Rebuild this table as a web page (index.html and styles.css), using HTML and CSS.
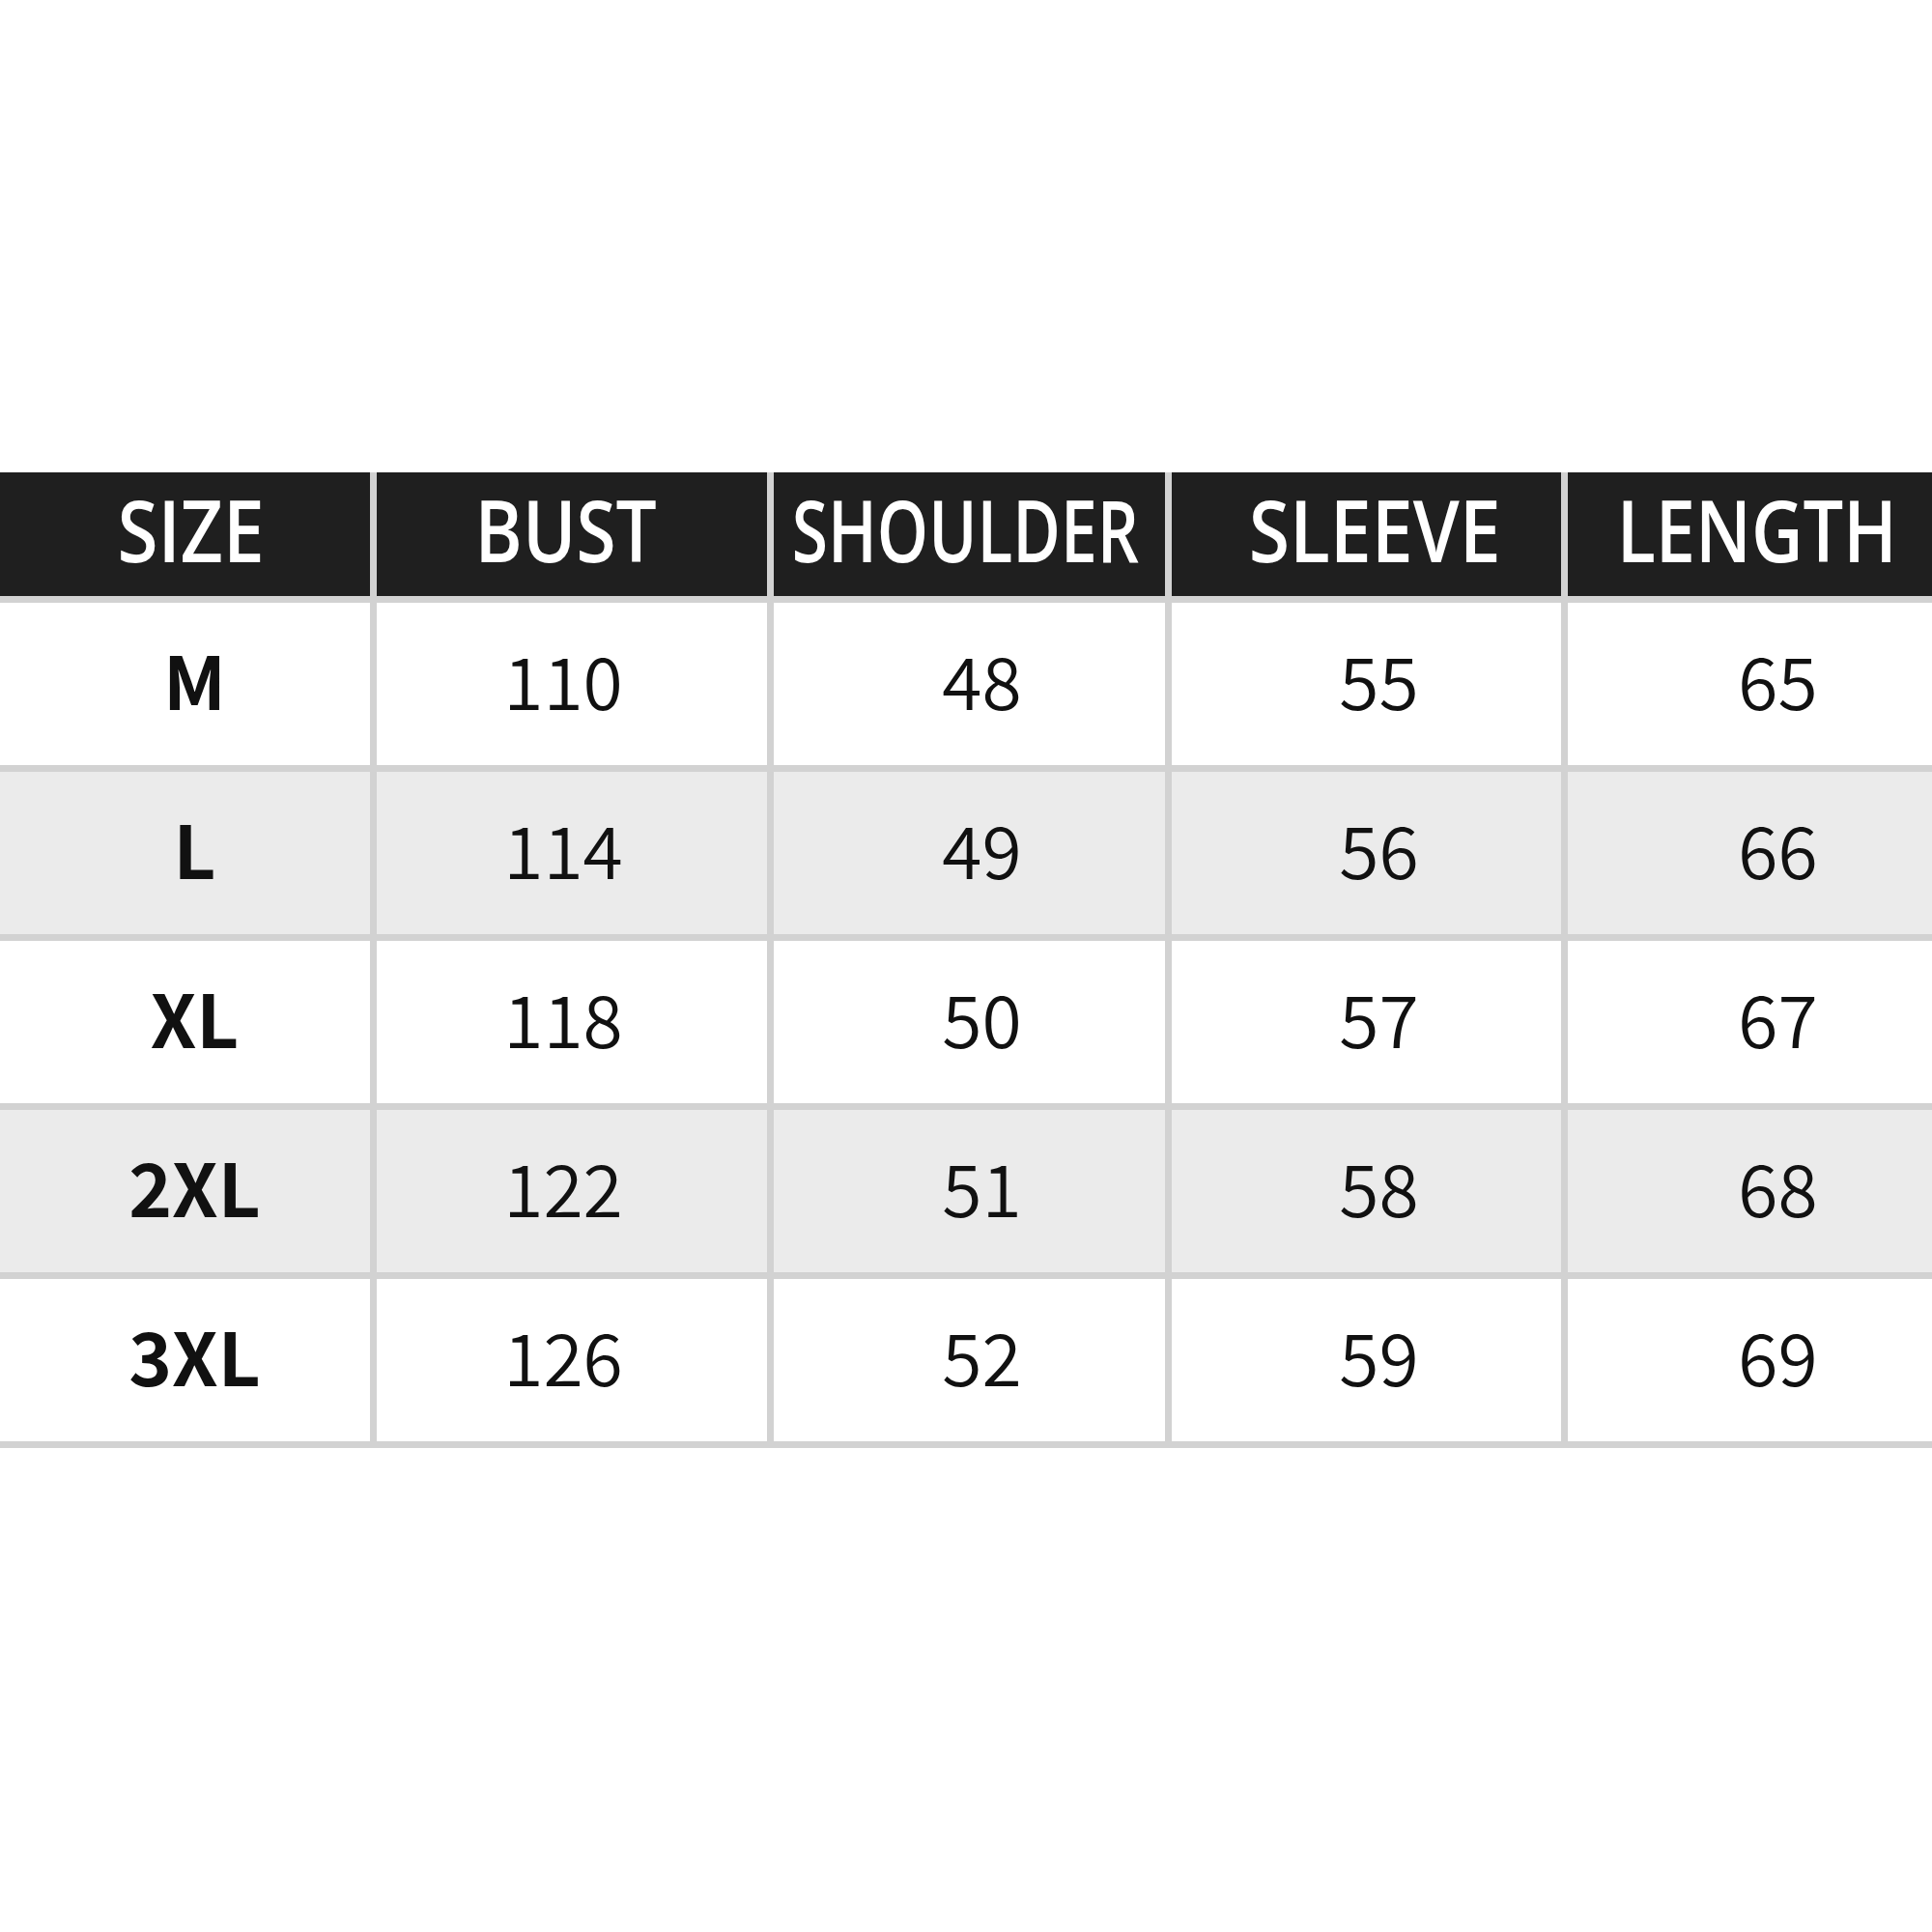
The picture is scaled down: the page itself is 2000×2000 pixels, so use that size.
FILE: index.html
```html
<!DOCTYPE html>
<html>
<head>
<meta charset="utf-8">
<title>Size chart</title>
<link rel="stylesheet" href="styles.css">
</head>
<body>
<div class="page">
  <div class="chart">
    <div class="hd h1"><span class="ht t1">SIZE</span></div>
    <div class="hd h2"><span class="ht t2">BUST</span></div>
    <div class="hd h3"><span class="ht t3">SHOULDER</span></div>
    <div class="hd h4"><span class="ht t4">SLEEVE</span></div>
    <div class="hd h5"><span class="ht t5">LENGTH</span></div>

    <div class="cell sz c1">M</div>
    <div class="cell c2">110</div>
    <div class="cell c3">48</div>
    <div class="cell c4">55</div>
    <div class="cell c5">65</div>

    <div class="cell alt sz c1">L</div>
    <div class="cell alt c2">114</div>
    <div class="cell alt c3">49</div>
    <div class="cell alt c4">56</div>
    <div class="cell alt c5">66</div>

    <div class="cell sz c1">XL</div>
    <div class="cell c2">118</div>
    <div class="cell c3">50</div>
    <div class="cell c4">57</div>
    <div class="cell c5">67</div>

    <div class="cell alt sz c1">2XL</div>
    <div class="cell alt c2">122</div>
    <div class="cell alt c3">51</div>
    <div class="cell alt c4">58</div>
    <div class="cell alt c5">68</div>

    <div class="cell sz c1">3XL</div>
    <div class="cell c2">126</div>
    <div class="cell c3">52</div>
    <div class="cell c4">59</div>
    <div class="cell c5">69</div>
  </div>
</div>
</body>
</html>
```

FILE: styles.css
```css
html, body {
  margin: 0;
  padding: 0;
  background: #ffffff;
}

.page {
  width: 2000px;
  height: 2000px;
  padding-top: 489px;
  box-sizing: border-box;
  overflow: hidden;
}

.chart {
  display: grid;
  grid-template-columns: 383px 404px 405px 403px 1fr;
  grid-template-rows: 128px repeat(5, 168px);
  column-gap: 7px;
  row-gap: 7px;
  background: #d2d2d2;
  padding-bottom: 7px;
}

.hd {
  background: #1f1f1f;
  display: flex;
  align-items: center;
  justify-content: center;
  color: #ffffff;
  font-family: "Open Sans", "Liberation Sans", sans-serif;
  font-weight: 600;
  font-size: 88px;
  line-height: 1;
  box-sizing: border-box;
  padding-bottom: 10px;
}

.ht {
  display: inline-block;
  white-space: nowrap;
}

.t1 { transform: scaleX(0.87); }
.t2 { transform: scaleX(0.85); }
.t3 { transform: scaleX(0.77); }
.t4 { transform: scaleX(0.875); }
.t5 { transform: scaleX(0.84); }

.h1 { padding-left: 12px; }
.h2 { padding-right: 12px; }
.h3 { padding-right: 8px; }
.h4 { padding-left: 18px; }
.h5 { padding-left: 14px; }

.cell {
  background: #ffffff;
  display: flex;
  align-items: center;
  justify-content: center;
  color: #111111;
  font-family: "Noto Sans CJK SC", "Noto Sans", sans-serif;
  font-weight: 350;
  font-size: 75px;
  line-height: 1;
  box-sizing: border-box;
  padding-bottom: 12px;
}

.cell.alt {
  background: #ebebeb;
}

.cell.sz {
  font-weight: 700;
  font-size: 76px;
}

.c1 { padding-left: 20px; }
.c2 { padding-right: 18px; }
.c3 { padding-left: 26px; }
.c4 { padding-left: 26px; }
.c5 { padding-left: 58px; }
```
